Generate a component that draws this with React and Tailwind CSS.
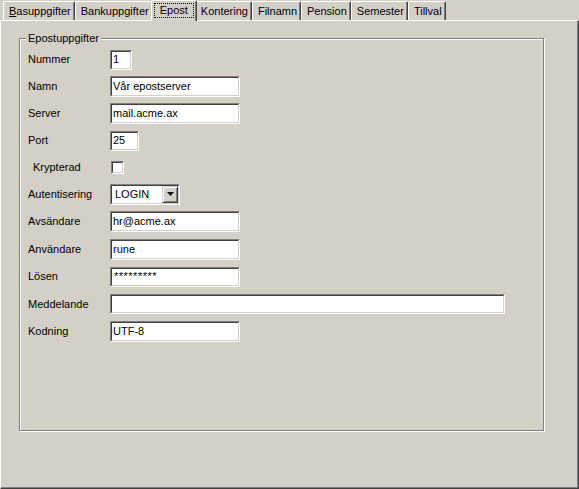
import React from 'react';

const tabs = ['Basuppgifter', 'Bankuppgifter', 'Epost', 'Kontering', 'Filnamn', 'Pension', 'Semester', 'Tillval'];

const Sunken = ({ w, h = 'h-[21px]', children }) => (
  <div className={`${w} ${h} border border-t-[#808080] border-l-[#808080] border-b-white border-r-white`}>
    <div className="h-full border border-t-[#404040] border-l-[#404040] border-b-[#d4d0c8] border-r-[#d4d0c8] bg-white flex items-center pl-[1px] overflow-hidden whitespace-nowrap">
      {children}
    </div>
  </div>
);

const Row = ({ label, h = 'h-[27px]', indent = false, children }) => (
  <div className={`flex items-center ${h}`}>
    <div className={`w-[82px] ${indent ? 'pl-[5px]' : ''}`}>{label}</div>
    {children}
  </div>
);

const App = () => {
  return (
    <div className="w-[579px] h-[489px] bg-[#d4d0c8] flex flex-col text-[11px] text-black font-['Liberation_Sans',Arial,sans-serif] overflow-hidden">
      {/* Tabs */}
      <div className="flex items-end h-[21px] pl-[3px] relative z-10">
        {tabs.map((t) =>
          t === 'Epost' ? (
            <div
              key={t}
              className="h-[21px] -mx-[2px] px-[2px] pt-[2px] bg-[#d4d0c8] border-t border-l border-white border-r border-r-[#404040] shadow-[inset_-1px_0_0_#808080] rounded-t-[2px] relative z-10"
            >
              <div className="border border-dotted border-black px-[5px] leading-[13px]">{t}</div>
            </div>
          ) : (
            <div
              key={t}
              className="h-[19px] mb-[1px] pl-[5px] pr-[3px] pt-[3px] leading-[13px] border-t border-l border-white border-r border-r-[#404040] shadow-[inset_-1px_0_0_#808080] rounded-t-[2px]"
            >
              {t === 'Basuppgifter' ? (
                <span>
                  <span className="underline">B</span>asuppgifter
                </span>
              ) : (
                t
              )}
            </div>
          )
        )}
      </div>

      {/* Panel */}
      <div className="flex-1 -mt-[1px] border-t border-l border-white border-r border-b border-r-[#404040] border-b-[#404040] shadow-[inset_-1px_-1px_0_#808080] pl-[18px] pt-[17px] pr-[34px] pb-[57px] flex">
        <div className="flex-1 relative border border-[#808080] shadow-[inset_1px_1px_0_white,1px_1px_0_white] pl-[8px] pt-[7px]">
          <div className="absolute -top-[7px] left-[6px] px-[2px] bg-[#d4d0c8] leading-[13px]">Epostuppgifter</div>

          <Row label="Nummer">
            <Sunken w="w-[22px]" h="h-[20px]">1</Sunken>
          </Row>
          <Row label="Namn">
            <Sunken w="w-[130px]">Vår epostserver</Sunken>
          </Row>
          <Row label="Server">
            <Sunken w="w-[130px]">mail.acme.ax</Sunken>
          </Row>
          <Row label="Port">
            <Sunken w="w-[29px]" h="h-[20px]">25</Sunken>
          </Row>
          <Row label="Krypterad" h="h-[26px]" indent>
            <div className="ml-[1px] w-[13px] h-[13px] border border-t-[#808080] border-l-[#808080] border-b-white border-r-white">
              <div className="h-full border border-t-[#404040] border-l-[#404040] border-b-[#d4d0c8] border-r-[#d4d0c8] bg-white" />
            </div>
          </Row>
          <Row label="Autentisering" h="h-[28px]">
            <div className="w-[70px] h-[21px] border border-t-[#808080] border-l-[#808080] border-b-white border-r-white">
              <div className="h-full border border-t-[#404040] border-l-[#404040] border-b-[#d4d0c8] border-r-[#d4d0c8] bg-white flex items-center">
                <span className="flex-1 pl-[3px]">LOGIN</span>
                <div className="w-[16px] h-[17px] bg-[#d4d0c8] border border-t-[#d4d0c8] border-l-[#d4d0c8] border-b-[#404040] border-r-[#404040] shadow-[inset_1px_1px_0_white,inset_-1px_-1px_0_#808080] flex items-center justify-center">
                  <svg width="7" height="4" viewBox="0 0 7 4">
                    <path d="M0 0h7L3.5 4z" fill="black" />
                  </svg>
                </div>
              </div>
            </div>
          </Row>
          <Row label="Avsändare">
            <Sunken w="w-[130px]">hr@acme.ax</Sunken>
          </Row>
          <Row label="Användare" h="h-[28px]">
            <Sunken w="w-[130px]">rune</Sunken>
          </Row>
          <Row label="Lösen">
            <Sunken w="w-[130px]" h="h-[20px]">
              <span className="pl-[1px] tracking-[0.5px]">*********</span>
            </Sunken>
          </Row>
          <Row label="Meddelande" h="h-[28px]">
            <Sunken w="w-[395px]" h="h-[20px]" />
          </Row>
          <Row label="Kodning">
            <Sunken w="w-[130px]">UTF-8</Sunken>
          </Row>
        </div>
      </div>
    </div>
  );
};

export default App;
